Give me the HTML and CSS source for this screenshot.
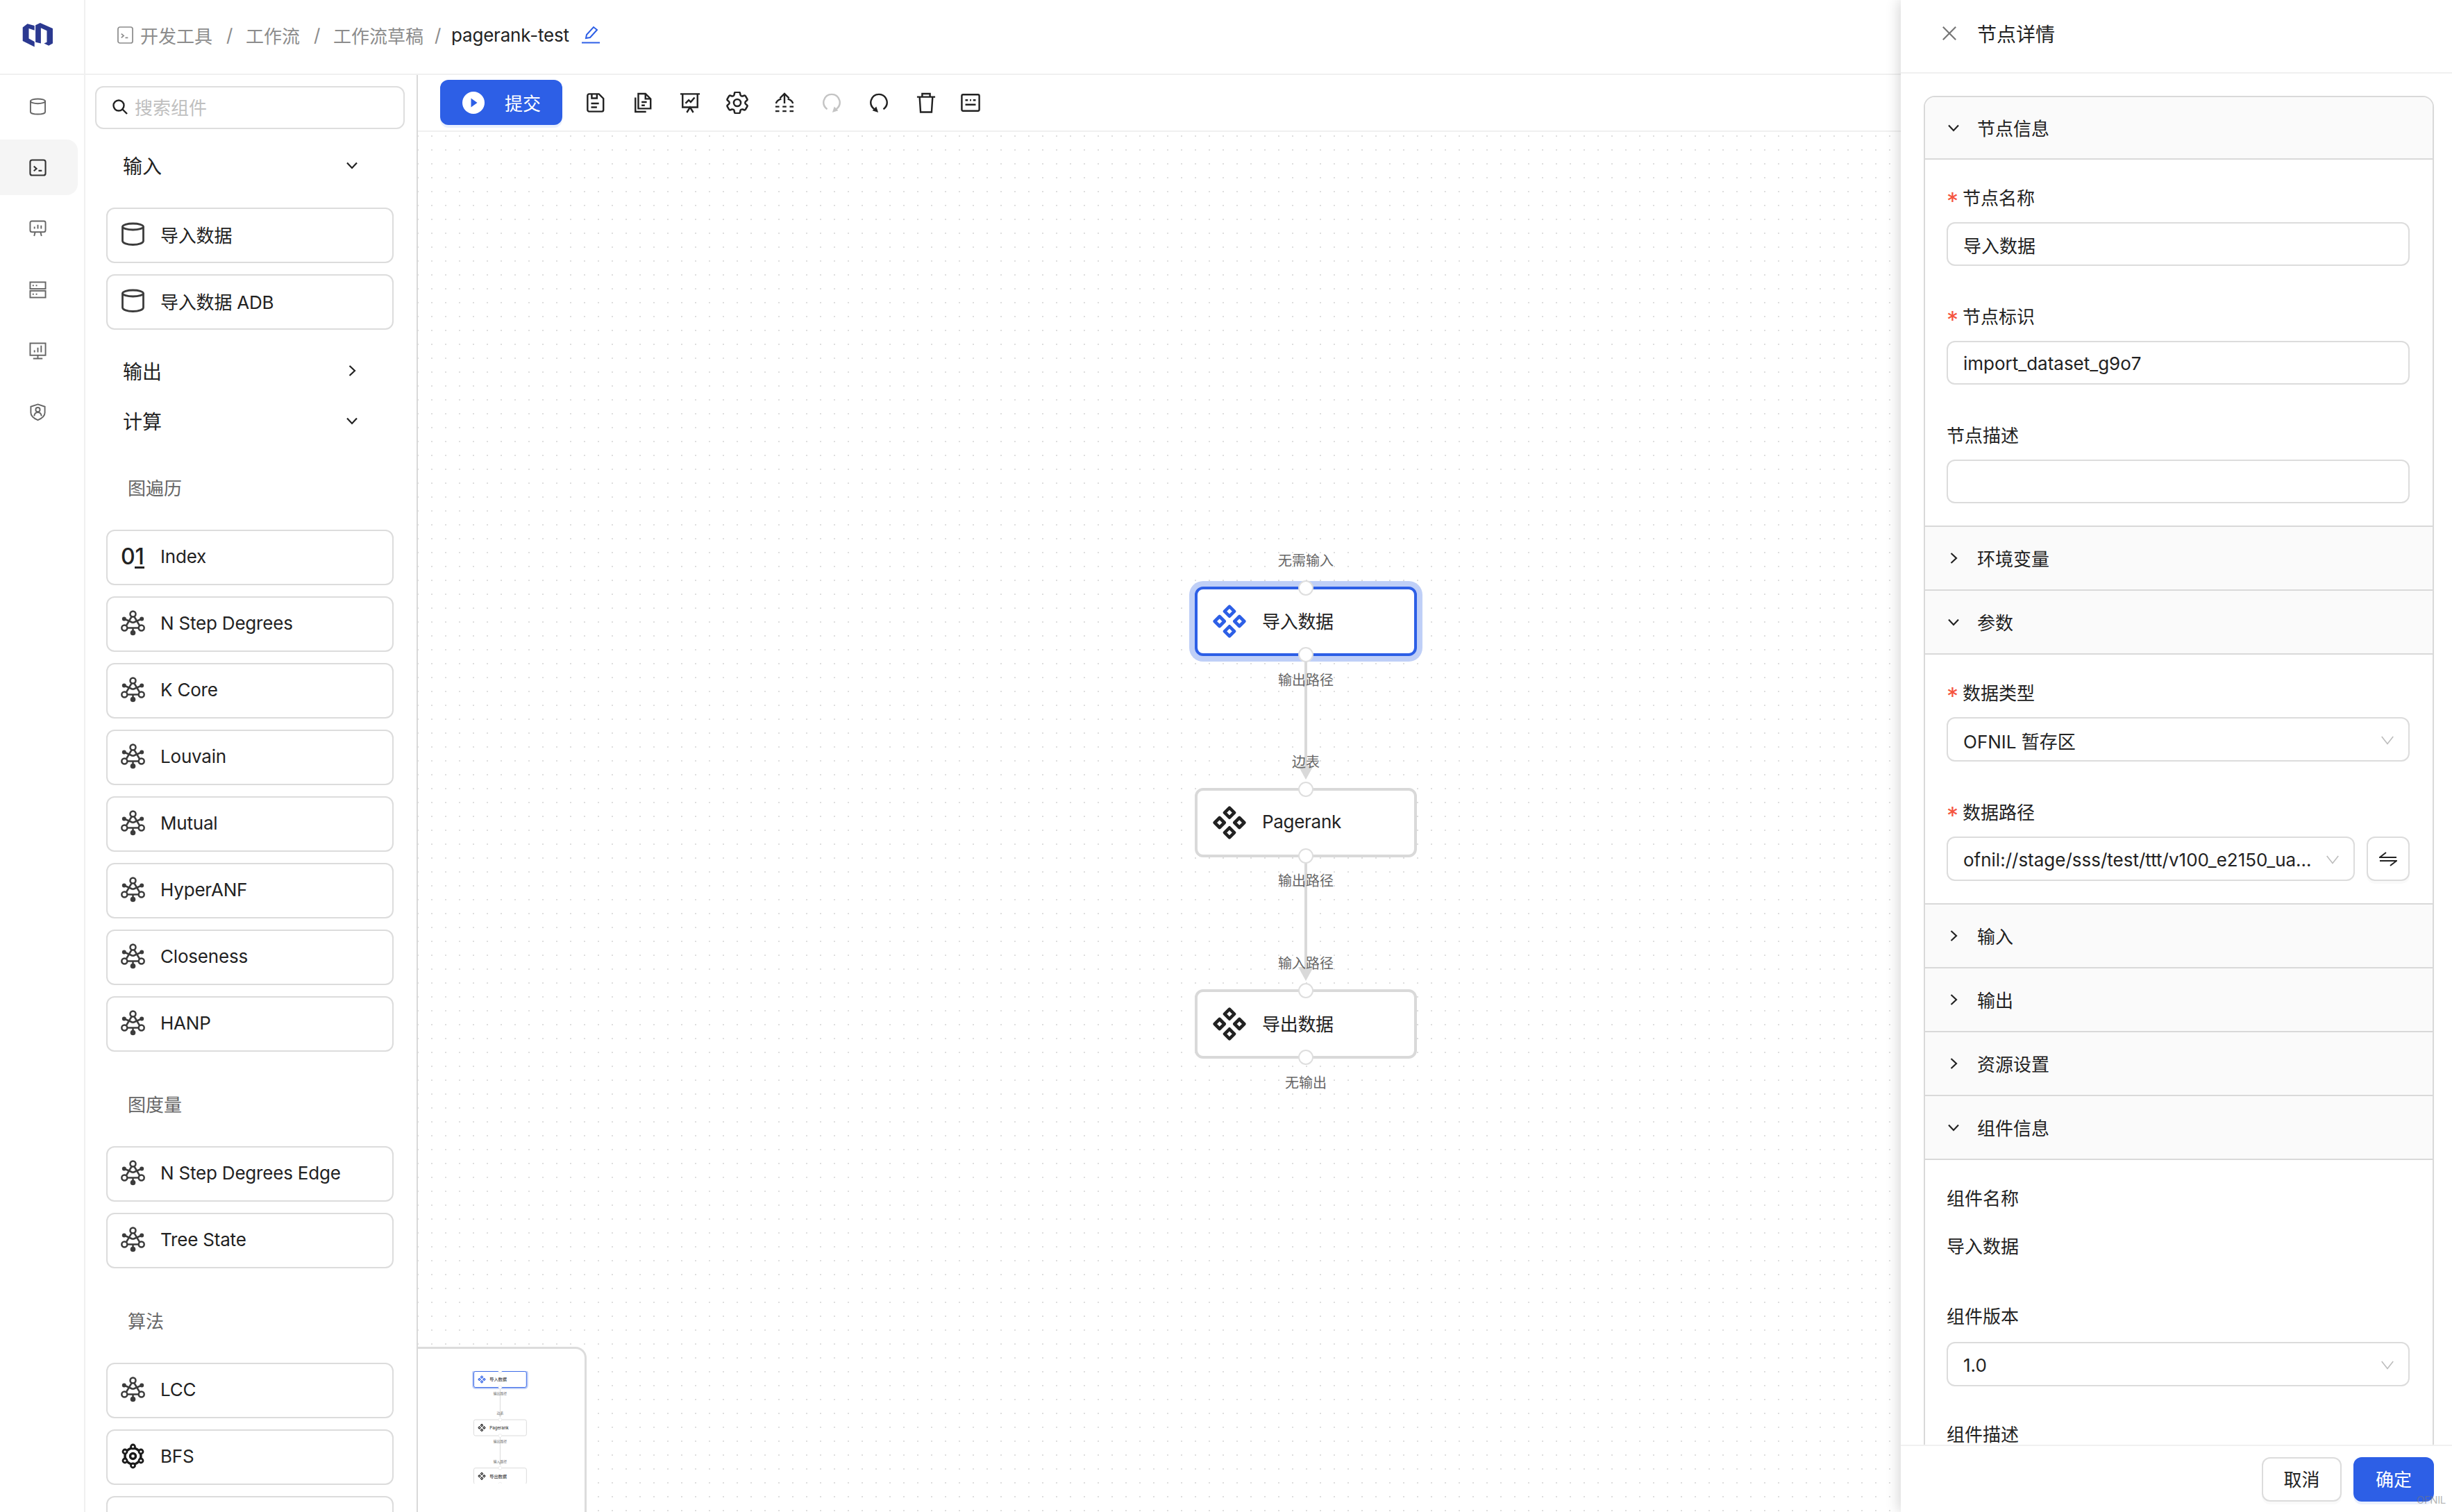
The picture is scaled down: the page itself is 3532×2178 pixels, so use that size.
FILE: index.html
```html
<!DOCTYPE html>
<html lang="zh-CN">
<head>
<meta charset="utf-8">
<title>工作流草稿 - pagerank-test</title>
<link rel="stylesheet" href="styles.css">
</head>
<body>
<svg class="defs" width="0" height="0" aria-hidden="true">
  <symbol id="i-db" viewBox="0 0 35 35"><g fill="none" stroke="currentColor" stroke-width="2.800"><ellipse cx="17.500" cy="6.500" rx="15" ry="4.500"/><path d="M2.500 6.500V27c0 3 6.500 5.500 15 5.500S32.500 30 32.500 27V6.500"/></g></symbol>
  <symbol id="i-graph" viewBox="0 0 35 37"><g fill="none" stroke="currentColor" stroke-width="2.500"><circle cx="17.500" cy="5.500" r="4"/><circle cx="5.300" cy="25.500" r="4"/><circle cx="29.700" cy="25.500" r="4"/><path d="M15.800 9 8 22M19.200 9 27 22M9.300 25.500h16.400M17.500 25.500V32M17.500 18 6 13M17.500 18 29 13"/></g><g fill="currentColor"><circle cx="4.800" cy="12.500" r="3"/><circle cx="30.200" cy="12.500" r="3"/><circle cx="17.500" cy="32.500" r="3.800"/></g></symbol>
  <symbol id="i-bfs" viewBox="0 0 35 37"><circle cx="17.500" cy="18.500" r="11.500" fill="none" stroke="currentColor" stroke-width="3.400"/><circle cx="17.500" cy="18.500" r="4" fill="none" stroke="currentColor" stroke-width="3.400"/><g fill="#fff" stroke="currentColor" stroke-width="2.800"><circle cx="17.500" cy="5" r="3"/><circle cx="17.500" cy="32" r="3"/><circle cx="6" cy="12" r="3"/><circle cx="29" cy="12" r="3"/><circle cx="6" cy="25" r="3"/><circle cx="29" cy="25" r="3"/></g></symbol>
  <symbol id="i-diamonds" viewBox="0 0 48 48"><g fill="none" stroke="currentColor" stroke-width="4.600" stroke-linejoin="round"><path d="M24 2.700 31 9.700 24 16.700 17 9.700Z"/><path d="M24 31.300 31 38.300 24 45.300 17 38.300Z"/><path d="M9.700 17 16.700 24 9.700 31 2.700 24Z"/><path d="M38.300 17 45.300 24 38.300 31 31.300 24Z"/></g></symbol>
  <symbol id="i-down" viewBox="0 0 24 24"><path d="M5 8.500 12 16l7-7.500" fill="none" stroke="currentColor" stroke-width="2.200"/></symbol>
  <symbol id="i-right" viewBox="0 0 24 24"><path d="M8.500 5 16 12l-7.500 7" fill="none" stroke="currentColor" stroke-width="2.200"/></symbol>
  <symbol id="i-sel" viewBox="0 0 24 24"><path d="M3 6.500 12 18l9-11.500" fill="none" stroke="currentColor" stroke-width="1.700"/></symbol>
  <symbol id="i-undo" viewBox="0 0 30 32"><g fill="none" stroke="currentColor" stroke-width="2.600"><path d="M8 26C3 22 1.500 17 3 12 5 6 10 3 15 3s10 3 12 9c1.500 5 0 10-5 14"/></g><path d="M16 31l3-9 6 6Z" fill="currentColor"/></symbol>
  <symbol id="i-redo" viewBox="0 0 30 32"><g fill="none" stroke="currentColor" stroke-width="2.600"><path d="M22 26c5-4 6.500-9 5-14C25 6 20 3 15 3S5 6 3 12c-1.500 5 0 10 5 14"/></g><path d="M14 31l-3-9-6 6Z" fill="currentColor"/></symbol>
</svg>

<div class="app">
  <aside class="rail">
    <div class="logo">
      <svg class="logo-mark" viewBox="0 0 44 34"><g fill="#2b3990"><path d="M.7 6.300 7.300 1l10 2.700v6.600l-8-2.600V22l8 4.300v7.400L.7 25.300Z"/><path d="M18.700 3 25.300 0 43 7.700v21l-5.700 3.300-6.600-3.300 4-1.700V11l-8.400-4v21.700L18.700 27Z"/></g></svg>
    </div>
    <nav class="rail-nav">
      <a class="rail-item"><svg class="rail-icon" viewBox="0 0 26 26"><g fill="none" stroke="currentColor" stroke-width="2"><ellipse cx="13" cy="5" rx="11" ry="3.500"/><path d="M2 5v16c0 2.200 5 3.500 11 3.500S24 23.200 24 21V5"/></g></svg></a>
      <a class="rail-item active"><svg class="rail-icon" viewBox="0 0 26 26"><g fill="none" stroke="currentColor" stroke-width="2.200"><rect x="1.500" y="1.500" width="23" height="23" rx="3"/><path d="M7 11l4 3.500L7 18M14 17.500h5"/></g></svg></a>
      <a class="rail-item"><svg class="rail-icon" viewBox="0 0 26 26"><g fill="none" stroke="currentColor" stroke-width="2"><path d="M4 1.500h18a2.500 2.500 0 0 1 2.500 2.500v11a3 3 0 0 1-3 3h-17a3 3 0 0 1-3-3V4A2.500 2.500 0 0 1 4 1.500Z"/><path d="M8 13v-3M13 13V7M18 13V8M9 18l-1.500 6M17 18l1.500 6"/></g></svg></a>
      <a class="rail-item"><svg class="rail-icon" viewBox="0 0 26 26"><g fill="none" stroke="currentColor" stroke-width="2"><rect x="1.500" y="1.500" width="23" height="10"/><rect x="1.500" y="14.500" width="23" height="10"/><path d="M5 6.500h2M10 6.500h2M5 19.500h2M10 19.500h2"/></g></svg></a>
      <a class="rail-item"><svg class="rail-icon" viewBox="0 0 26 26"><g fill="none" stroke="currentColor" stroke-width="2"><rect x="1.500" y="1.500" width="23" height="18"/><path d="M8 15v-3M13 15V8M18 15V5M13 19.500V24M6 24.500h14"/></g></svg></a>
      <a class="rail-item"><svg class="rail-icon" viewBox="0 0 26 26"><g fill="none" stroke="currentColor" stroke-width="2"><path d="M13 1.500 23.500 5v9c0 5-4.500 8.500-10.500 11C7 22.500 2.500 19 2.500 14V5Z"/><circle cx="13" cy="9.500" r="3.200"/><path d="M7.500 19c.5-3.500 2.500-5.500 5.500-5.500s5 2 5.500 5.500"/></g></svg></a>
    </nav>
  </aside>

  <div class="workspace">
    <header class="topbar">
      <svg class="crumb-icon" viewBox="0 0 24 26"><g fill="none" stroke="currentColor" stroke-width="1.800"><rect x="1" y="1" width="22" height="24" rx="3"/><path d="M6 11l3.500 3L6 17M12 17h4"/></g></svg>
      <span class="crumb">开发工具</span><span class="sep">/</span>
      <span class="crumb">工作流</span><span class="sep">/</span>
      <span class="crumb">工作流草稿</span><span class="sep">/</span>
      <span class="crumb current">pagerank-test</span>
      <svg class="edit-icon" viewBox="0 0 26 26"><g fill="none" stroke="#2d5fe6" stroke-width="2"><path d="M6 18 7 13 17 2l5 4-10 11Z"/><path d="M0 24.500h26"/></g></svg>
    </header>

    <div class="content">
      <aside class="panel">
        <div class="search">
          <svg class="search-icon" viewBox="0 0 24 24"><g fill="none" stroke="#222" stroke-width="2.400"><circle cx="10" cy="10" r="7.500"/><path d="M15.500 15.500 22 22"/></g></svg>
          <span class="placeholder">搜索组件</span>
        </div>

        <div class="section"><span>输入</span><svg class="chev"><use href="#i-down"/></svg></div>
        <div class="items">
          <div class="item"><svg class="item-icon"><use href="#i-db"/></svg><span>导入数据</span></div>
          <div class="item"><svg class="item-icon"><use href="#i-db"/></svg><span>导入数据 ADB</span></div>
        </div>
        <div class="section gap-top"><span>输出</span><svg class="chev"><use href="#i-right"/></svg></div>
        <div class="section"><span>计算</span><svg class="chev"><use href="#i-down"/></svg></div>

        <div class="group-label first">图遍历</div>
        <div class="items">
          <div class="item"><span class="zero-one">0<span class="under">1</span></span><span>Index</span></div>
          <div class="item"><svg class="item-icon"><use href="#i-graph"/></svg><span>N Step Degrees</span></div>
          <div class="item"><svg class="item-icon"><use href="#i-graph"/></svg><span>K Core</span></div>
          <div class="item"><svg class="item-icon"><use href="#i-graph"/></svg><span>Louvain</span></div>
          <div class="item"><svg class="item-icon"><use href="#i-graph"/></svg><span>Mutual</span></div>
          <div class="item"><svg class="item-icon"><use href="#i-graph"/></svg><span>HyperANF</span></div>
          <div class="item"><svg class="item-icon"><use href="#i-graph"/></svg><span>Closeness</span></div>
          <div class="item"><svg class="item-icon"><use href="#i-graph"/></svg><span>HANP</span></div>
        </div>
        <div class="group-label">图度量</div>
        <div class="items">
          <div class="item"><svg class="item-icon"><use href="#i-graph"/></svg><span>N Step Degrees Edge</span></div>
          <div class="item"><svg class="item-icon"><use href="#i-graph"/></svg><span>Tree State</span></div>
        </div>
        <div class="group-label">算法</div>
        <div class="items">
          <div class="item"><svg class="item-icon"><use href="#i-graph"/></svg><span>LCC</span></div>
          <div class="item"><svg class="item-icon dark"><use href="#i-bfs"/></svg><span>BFS</span></div>
          <div class="item"></div>
        </div>
      </aside>

      <main class="stage">
        <div class="toolbar">
          <button class="submit"><svg class="play" viewBox="0 0 32 32"><circle cx="16" cy="16" r="16" fill="#fff"/><path d="M12.500 9.500 21.500 16l-9 6.500Z" fill="#2d5fe6"/></svg><span>提交</span></button>
          <div class="tools">
            <svg class="tool" viewBox="0 0 30 32"><g fill="none" stroke="currentColor" stroke-width="2.600"><path d="M5 2.500h15l7 7V27a2.500 2.500 0 0 1-2.500 2.500H5A2.500 2.500 0 0 1 2.500 27V5A2.500 2.500 0 0 1 5 2.500Z"/><path d="M9 3v6h8V3M8 17h12M8 23h9"/></g></svg>
            <svg class="tool" viewBox="0 0 30 32"><g fill="none" stroke="currentColor" stroke-width="2.600"><path d="M8 2h11l8 8v15H8Z"/><path d="M19 2v8h8M13 15h8M13 20h5M3.500 8v22H20"/></g></svg>
            <svg class="tool" viewBox="0 0 30 32"><g fill="none" stroke="currentColor" stroke-width="2.600"><path d="M0 2.500h30M3.500 3v20h23V3M10 31l5-8 5 8"/><path d="M8 17l5-5 3 3 6-7"/></g></svg>
            <svg class="tool gear" viewBox="2.500 2.500 19 19"><g fill="none" stroke="currentColor" stroke-width="1.500"><path d="M9.594 3.940c.09-.542.56-.94 1.110-.94h2.593c.55 0 1.020.398 1.110.94l.213 1.281c.063.374.313.686.645.870.074.040.147.083.220.127.325.196.720.257 1.075.124l1.217-.456a1.125 1.125 0 0 1 1.370.490l1.296 2.247a1.125 1.125 0 0 1-.260 1.431l-1.003.827c-.293.241-.438.613-.430.992a7.723 7.723 0 0 1 0 .255c-.008.378.137.750.430.991l1.004.827c.424.350.534.955.260 1.430l-1.298 2.247a1.125 1.125 0 0 1-1.369.491l-1.217-.456c-.355-.133-.750-.072-1.076.124a6.470 6.470 0 0 1-.220.128c-.331.183-.581.495-.644.869l-.213 1.281c-.09.543-.56.940-1.110.940h-2.594c-.55 0-1.019-.398-1.110-.940l-.213-1.281c-.062-.374-.312-.686-.644-.870a6.520 6.520 0 0 1-.220-.127c-.325-.196-.720-.257-1.076-.124l-1.217.456a1.125 1.125 0 0 1-1.369-.490l-1.297-2.247a1.125 1.125 0 0 1 .260-1.431l1.004-.827c.292-.240.437-.613.430-.991a6.932 6.932 0 0 1 0-.255c.007-.380-.138-.751-.430-.992l-1.004-.827a1.125 1.125 0 0 1-.260-1.430l1.297-2.247a1.125 1.125 0 0 1 1.370-.491l1.216.456c.356.133.751.072 1.076-.124.072-.044.146-.086.220-.128.332-.183.582-.495.644-.869l.214-1.280Z"/><circle cx="12" cy="12" r="3"/></g></svg>
            <svg class="tool" viewBox="0 0 30 32"><g fill="none" stroke="currentColor" stroke-width="2.600"><path d="M15 17V3M8 9l7-7 7 7M2 17c1-5 5-6 8-7M28 17c-1-5-5-6-8-7"/><path d="M1 22h6M12 22h6M23 22h6M1 29h6M12 29h6M23 29h6"/></g></svg>
            <svg class="tool muted"><use href="#i-undo"/></svg>
            <svg class="tool"><use href="#i-redo"/></svg>
            <svg class="tool" viewBox="0 0 30 32"><g fill="none" stroke="currentColor" stroke-width="2.600"><path d="M1 7h28M9 7V2h12v5M5 7l1.500 23.500h17L25 7"/></g></svg>
            <svg class="tool last" viewBox="0 0 30 32"><g fill="none" stroke="currentColor" stroke-width="2.600"><rect x="1.500" y="3.500" width="27" height="25" rx="2"/><path d="M7 12h4M14 12h2M19 12h4M7 19h16"/></g></svg>
          </div>
        </div>

        <div class="canvas">
          <div class="graph">
            <svg class="edges" viewBox="0 0 40 480"><g fill="#d9d9d9"><rect x="18" y="0" width="4" height="160"/><path d="M9 158h22l-11 20Z"/><rect x="18" y="290" width="4" height="160"/><path d="M9 448h22l-11 20Z"/></g></svg>
            <div class="elabel l1">无需输入</div>
            <div class="elabel l2">输出路径</div>
            <div class="elabel l3">边表</div>
            <div class="elabel l4">输出路径</div>
            <div class="elabel l5">输入路径</div>
            <div class="elabel l6">无输出</div>
            <div class="node n1 selected"><svg class="node-icon"><use href="#i-diamonds"/></svg><span>导入数据</span><i class="port top"></i><i class="port bottom"></i></div>
            <div class="node n2"><svg class="node-icon"><use href="#i-diamonds"/></svg><span>Pagerank</span><i class="port top"></i><i class="port bottom"></i></div>
            <div class="node n3"><svg class="node-icon"><use href="#i-diamonds"/></svg><span>导出数据</span><i class="port top"></i><i class="port bottom"></i></div>
          </div>

          <div class="minimap">
            <div class="mini-clip">
              <div class="graph mini">
                <svg class="edges" viewBox="0 0 40 480"><g fill="#d9d9d9"><rect x="18" y="0" width="4" height="160"/><path d="M9 158h22l-11 20Z"/><rect x="18" y="290" width="4" height="160"/><path d="M9 448h22l-11 20Z"/></g></svg>
                <div class="elabel l2">输出路径</div>
                <div class="elabel l3">边表</div>
                <div class="elabel l4">输出路径</div>
                <div class="elabel l5">输入路径</div>
                <div class="node n1 selected"><svg class="node-icon"><use href="#i-diamonds"/></svg><span>导入数据</span><i class="port top"></i><i class="port bottom"></i></div>
                <div class="node n2"><svg class="node-icon"><use href="#i-diamonds"/></svg><span>Pagerank</span><i class="port top"></i><i class="port bottom"></i></div>
                <div class="node n3"><svg class="node-icon"><use href="#i-diamonds"/></svg><span>导出数据</span><i class="port top"></i><i class="port bottom"></i></div>
              </div>
            </div>
          </div>
        </div>
      </main>
    </div>
  </div>
</div>

<section class="drawer">
  <header class="drawer-head">
    <svg class="close" viewBox="0 0 24 24"><path d="M2 2l20 20M22 2 2 22" fill="none" stroke="#777" stroke-width="2.400"/></svg>
    <span>节点详情</span>
  </header>
  <div class="drawer-body">
    <div class="collapse">
      <div class="c-head"><svg class="c-chev"><use href="#i-down"/></svg><span>节点信息</span></div>
      <div class="c-body">
        <div class="field"><label class="req">节点名称</label><div class="input">导入数据</div></div>
        <div class="field"><label class="req">节点标识</label><div class="input">import_dataset_g9o7</div></div>
        <div class="field"><label>节点描述</label><div class="input"></div></div>
      </div>
      <div class="c-head"><svg class="c-chev"><use href="#i-right"/></svg><span>环境变量</span></div>
      <div class="c-head"><svg class="c-chev"><use href="#i-down"/></svg><span>参数</span></div>
      <div class="c-body">
        <div class="field"><label class="req">数据类型</label><div class="input select"><span>OFNIL 暂存区</span><svg class="sel-chev"><use href="#i-sel"/></svg></div></div>
        <div class="field"><label class="req">数据路径</label>
          <div class="input-row">
            <div class="input select grow"><span>ofnil://stage/sss/test/ttt/v100_e2150_ua...</span><svg class="sel-chev"><use href="#i-sel"/></svg></div>
            <button class="swap"><svg viewBox="0 0 26 24"><path d="M10 3 1 10h24M1 15h24l-9 7" fill="none" stroke="#222" stroke-width="2"/></svg></button>
          </div>
        </div>
      </div>
      <div class="c-head"><svg class="c-chev"><use href="#i-right"/></svg><span>输入</span></div>
      <div class="c-head"><svg class="c-chev"><use href="#i-right"/></svg><span>输出</span></div>
      <div class="c-head"><svg class="c-chev"><use href="#i-right"/></svg><span>资源设置</span></div>
      <div class="c-head"><svg class="c-chev"><use href="#i-down"/></svg><span>组件信息</span></div>
      <div class="c-body compact">
        <div class="field"><label>组件名称</label><div class="plain">导入数据</div></div>
        <div class="field"><label>组件版本</label><div class="input select"><span>1.0</span><svg class="sel-chev"><use href="#i-sel"/></svg></div></div>
        <div class="field"><label>组件描述</label></div>
      </div>
    </div>
  </div>
  <footer class="drawer-foot">
    <button class="btn">取消</button>
    <button class="btn primary">确定</button>
  </footer>
  <div class="watermark">OFNIL</div>
</section>
</body>
</html>
```

FILE: styles.css
```css
* { box-sizing: border-box; }
html, body { margin: 0; height: 100%; }
body {
  width: 3532px;
  height: 2178px;
  overflow: hidden;
  position: relative;
  background: #fff;
  color: #222;
  font-family: Inter, "Noto Sans CJK SC", sans-serif;
  font-size: 26px;
}
.defs { position: absolute; }
.app { display: flex; height: 2178px; }

/* rail */
.rail { width: 123px; flex: none; border-right: 2px solid #f0f0f0; }
.logo { height: 108px; border-bottom: 2px solid #f0f0f0; display: flex; align-items: center; padding: 0 0 6px 32px; }
.logo-mark { width: 45px; height: 35px; display: block; }
.rail-nav { display: flex; flex-direction: column; gap: 8px; padding-top: 5px; }
.rail-item { width: 112px; height: 80px; display: flex; align-items: center; justify-content: center; padding-right: 4px; border-radius: 0 16px 16px 0; color: #666; }
.rail-item.active { background: #f5f5f5; color: #333; }
.rail-icon { width: 25px; height: 25px; }

/* top bar */
.workspace { flex: 1; min-width: 0; display: flex; flex-direction: column; }
.topbar { height: 108px; flex: none; border-bottom: 2px solid #f0f0f0; display: flex; align-items: center; padding: 0 0 6px 46px; color: #8c8c8c; }
.crumb-icon { width: 23px; height: 25px; margin-right: 10px; }
.sep { width: 8px; margin: 0 20px 0 20px; }
.sep:nth-of-type(6) { margin: 0 16px; }
.current { color: #222; letter-spacing: -.2px; }
.edit-icon { width: 26px; height: 26px; margin-left: 18px; }

.content { flex: 1; min-height: 0; display: flex; }

/* component panel */
.panel { width: 479px; flex: none; border-right: 2px solid #d9d9d9; padding: 16px 17px 0 14px; overflow: hidden; }
.search { height: 62px; border: 2px solid #dedede; border-radius: 12px; display: flex; align-items: center; padding: 0 0 3px 22px; margin-bottom: 17px; }
.search-icon { width: 24px; height: 24px; margin-right: 9px; }
.placeholder { color: #bfbfbf; }
.section { height: 72px; display: flex; align-items: center; justify-content: space-between; padding: 0 64px 3px 40px; font-size: 28px; }
.section.gap-top { margin-top: 24px; }
.chev { width: 24px; height: 24px; }
.items { display: flex; flex-direction: column; gap: 16px; padding: 0 16px; }
.section + .items { margin-top: 24px; }
.item { height: 80px; flex: none; border: 2px solid #dcdcdc; border-radius: 12px; display: flex; align-items: center; padding: 0 0 3px 19px; gap: 22px; letter-spacing: -.2px; }
.item-icon { width: 35px; height: 37px; flex: none; color: #3c3c3c; }
.item-icon.dark { color: #1a1a1a; }
.zero-one { width: 35px; flex: none; font-size: 32px; line-height: 38px; font-weight: 500; }
.under { display: inline-block; line-height: 28px; border-bottom: 3px solid #222; }
.group-label { height: 80px; margin: 36px 0 20px; padding: 0 0 3px 47px; display: flex; align-items: center; color: #666; }
.group-label.first { margin-top: 20px; }

/* stage */
.stage { flex: 1; min-width: 0; display: flex; flex-direction: column; }
.toolbar { height: 82px; flex: none; border-bottom: 2px solid #f0f0f0; display: flex; align-items: flex-start; padding: 7px 0 0 32px; }
.submit { width: 176px; height: 65px; border: 0; border-radius: 12px; background: #2d5fe6; box-shadow: 0 4px 0 #eaf0fd; color: #fff; font: inherit; display: flex; align-items: center; padding: 0 0 0 32px; gap: 29px; }
.play { width: 32px; height: 32px; flex: none; }
.tools { display: flex; align-items: center; gap: 40px; padding: 17px 0 0 34px; }
.tool { width: 28px; height: 32px; color: #222; display: block; }
.tool.gear { width: 32px; margin: 0 -2px; }
.tool.muted { color: #c4c4c4; }
.tool.last { margin-left: -4px; }

.canvas {
  flex: 1;
  position: relative;
  overflow: hidden;
  background-color: #fff;
  background-image: radial-gradient(circle, #dedede 1px, transparent 1.4px);
  background-size: 20px 20px;
  background-position: -10px 16px;
}

/* graph: free canvas */
.graph { position: absolute; left: 1119px; top: 655px; width: 320px; height: 680px; }
.edges { position: absolute; left: 140px; top: 100px; width: 40px; height: 480px; overflow: visible; }
.node { position: absolute; left: 0; width: 320px; height: 100px; background: #fff; border: 4px solid #d9d9d9; border-radius: 12px; display: flex; align-items: center; padding-left: 22px; gap: 23px; font-size: 26px; letter-spacing: -.3px; }
.node span { padding-bottom: 3px; }
.n1 { top: 0; }
.n2 { top: 290px; }
.n3 { top: 580px; }
.node.selected { border-color: #2d5fe6; box-shadow: 0 0 0 8px #bfcff7; }
.node-icon { width: 48px; height: 48px; flex: none; color: #222; }
.selected .node-icon { color: #2d5fe6; }
.port { position: absolute; left: 50%; width: 22px; height: 22px; margin-left: -11px; background: #fff; border: 2px solid #dedede; border-radius: 50%; }
.port.top { top: -13px; }
.port.bottom { bottom: -13px; }
.elabel { position: absolute; left: 0; width: 320px; text-align: center; font-size: 20px; line-height: 28px; color: #666; }
.l1 { top: -51px; }
.l2 { top: 121px; }
.l3 { top: 239px; }
.l4 { top: 410px; }
.l5 { top: 529px; }
.l6 { top: 701px; }

/* minimap */
.minimap { position: absolute; left: 0; bottom: 0; width: 243px; height: 238px; background: #fff; border: solid #dcdcdc; border-width: 3px 3px 0 0; border-radius: 0 16px 0 0; }
.mini-clip { position: absolute; left: 76px; top: 32px; width: 84px; height: 162px; overflow: hidden; }
.graph.mini { left: 4px; top: 0; transform: scale(0.24); transform-origin: 0 0; }

/* drawer */
.drawer { position: absolute; right: 0; top: 0; bottom: 0; width: 794px; background: #fff; box-shadow: -3px 0 18px rgba(0,0,0,.16); display: flex; flex-direction: column; }
.drawer-head { height: 106px; flex: none; border-bottom: 2px solid #f0f0f0; display: flex; align-items: center; padding: 0 0 8px 59px; gap: 29px; font-size: 28px; }
.close { width: 22px; height: 22px; flex: none; }
.drawer-body { flex: 1; min-height: 0; overflow: hidden; padding: 32px 26px 0 33px; }
.collapse { border: 2px solid #d9d9d9; border-radius: 16px 16px 0 0; }
.c-head { height: 92px; background: #fafafa; border-bottom: 2px solid #d9d9d9; display: flex; align-items: center; padding: 0 0 1px 29px; gap: 22px; }
.collapse > .c-head:first-child { height: 90px; border-radius: 14px 14px 0 0; }
.c-chev { width: 24px; height: 24px; flex: none; }
.c-body { padding: 32px 33px 32px 31px; border-bottom: 2px solid #d9d9d9; }
.field + .field { margin-top: 50px; }
.field label { display: flex; align-items: center; height: 44px; line-height: 30px; padding-top: 4px; margin-bottom: 14px; }
.req::before { content: "*"; color: #f5553f; width: 23px; flex: none; font-size: 34px; line-height: 30px; padding-top: 7px; }
.input { height: 63px; border: 2px solid #dcdcdc; border-radius: 12px; display: flex; align-items: center; padding: 2px 22px 0; }
.select { height: 64px; justify-content: space-between; }
.sel-chev { width: 22px; height: 22px; color: #bcbcbc; flex: none; margin-right: -3px; }
.plain { height: 64px; display: flex; align-items: center; }
.input-row { display: flex; gap: 17px; }
.grow { flex: 1; min-width: 0; }
.grow span { white-space: nowrap; }
.swap { width: 62px; height: 64px; flex: none; background: #fff; border: 2px solid #dcdcdc; border-radius: 12px; box-shadow: 0 4px 0 #fafafa; display: flex; align-items: center; justify-content: center; padding: 0; }
.swap svg { width: 26px; height: 24px; }
.compact .field + .field { margin-top: 48px; }
.compact .field + .field label { margin-bottom: 16px; }
.compact .field:last-child { margin-top: 46px; }
.compact .field:last-child label { line-height: 26px; }
.drawer-foot { height: 97px; flex: none; background: #fff; border-top: 2px solid #f0f0f0; display: flex; justify-content: flex-end; align-items: flex-start; gap: 17px; padding: 16px 26px 0 0; position: relative; }
.btn { width: 115px; height: 64px; font: inherit; color: #222; background: #fff; border: 2px solid #dcdcdc; border-radius: 12px; box-shadow: 0 4px 0 #fafafa; padding: 0 0 3px; }
.btn.primary { width: 116px; background: #2d5fe6; border-color: #2d5fe6; color: #fff; box-shadow: 0 4px 0 #eaf0fd; }
.watermark { position: absolute; left: 743px; top: 2150px; font-size: 15px; line-height: 22px; letter-spacing: -.5px; color: rgba(120,120,120,.55); }
```
